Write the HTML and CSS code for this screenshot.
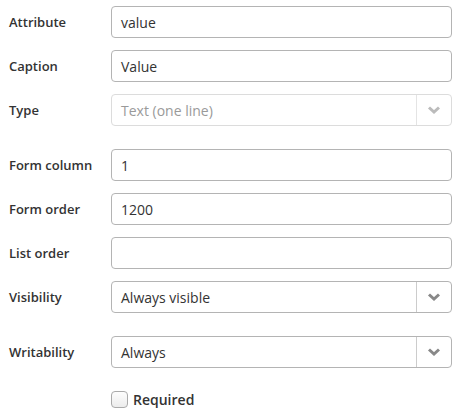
FILE: index.html
```html
<!DOCTYPE html>
<html>
<head>
<meta charset="utf-8">
<link rel="stylesheet" href="styles.css">
</head>
<body>
<form class="form">
  <div class="row">
    <label class="lbl">Attribute</label>
    <div class="field"><span class="val">value</span></div>
  </div>
  <div class="row">
    <label class="lbl">Caption</label>
    <div class="field"><span class="val">Value</span></div>
  </div>
  <div class="row spaced">
    <label class="lbl">Type</label>
    <div class="field select disabled"><span class="val">Text (one line)</span>
      <span class="arrow"><svg width="14" height="10" viewBox="0 0 14 10"><path d="M2 2.5 L7 7 L12 2.5" fill="none" stroke="currentColor" stroke-width="3" stroke-linejoin="miter"/></svg></span>
    </div>
  </div>
  <div class="row">
    <label class="lbl">Form column</label>
    <div class="field"><span class="val">1</span></div>
  </div>
  <div class="row">
    <label class="lbl">Form order</label>
    <div class="field"><span class="val">1200</span></div>
  </div>
  <div class="row">
    <label class="lbl">List order</label>
    <div class="field"><span class="val"></span></div>
  </div>
  <div class="row spaced">
    <label class="lbl">Visibility</label>
    <div class="field select"><span class="val">Always visible</span>
      <span class="arrow"><svg width="14" height="10" viewBox="0 0 14 10"><path d="M2 2.5 L7 7 L12 2.5" fill="none" stroke="currentColor" stroke-width="3" stroke-linejoin="miter"/></svg></span>
    </div>
  </div>
  <div class="row spaced">
    <label class="lbl">Writability</label>
    <div class="field select"><span class="val">Always</span>
      <span class="arrow"><svg width="14" height="10" viewBox="0 0 14 10"><path d="M2 2.5 L7 7 L12 2.5" fill="none" stroke="currentColor" stroke-width="3" stroke-linejoin="miter"/></svg></span>
    </div>
  </div>
  <div class="checkrow">
    <span class="box"></span>
    <span class="checklbl">Required</span>
  </div>
</form>
</body>
</html>
```
FILE: styles.css
```css
html, body {
  margin: 0;
  padding: 0;
  background: #fff;
}
body {
  font-family: "Open Sans", "Liberation Sans", sans-serif;
  color: #333;
  font-size: 14px;
}
.form {
  display: flex;
  flex-direction: column;
  padding: 6px 5px 0 9px;
}
.row {
  display: flex;
  align-items: center;
  height: 32px;
  margin-bottom: 12px;
}
.row.spaced {
  margin-bottom: 23px;
}
.lbl {
  width: 102px;
  flex: none;
  font-weight: 600;
  font-size: 13px;
  color: #333;
}
.field {
  flex: 1;
  height: 32px;
  box-sizing: border-box;
  border: 1px solid #b4b4b4;
  border-radius: 4px;
  display: flex;
  align-items: center;
  padding-left: 9px;
  font-size: 14px;
  color: #333;
}
.field.disabled {
  border-color: #dcdcdc;
  color: #9a9a9a;
}
.select .val {
  flex: 1;
}
.arrow {
  width: 34px;
  height: 100%;
  border-left: 1px solid #ccc;
  display: flex;
  align-items: center;
  justify-content: center;
  color: #888;
}
.disabled .arrow {
  border-left-color: #e4e4e4;
  color: #bbb;
}
.checkrow {
  display: flex;
  align-items: center;
  padding-left: 102px;
  margin-top: -1px;
}
.box {
  width: 17px;
  height: 17px;
  box-sizing: border-box;
  border: 1px solid #aaa;
  border-radius: 4px;
  background: linear-gradient(#fdfdfd, #ececec);
}
.checklbl {
  margin-left: 5px;
  font-weight: 600;
  font-size: 14px;
  color: #333;
}
```
